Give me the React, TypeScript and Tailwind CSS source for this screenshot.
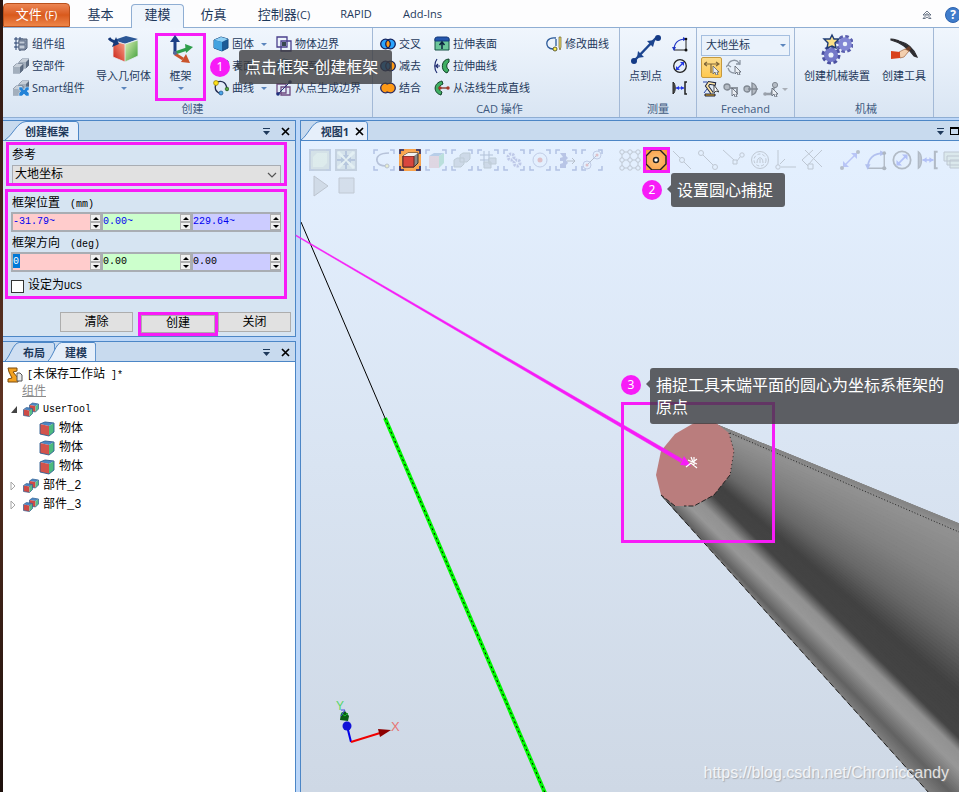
import { useState, type ReactNode } from 'react';
import clsx from 'clsx';

const UI = "font-['Open_Sans','Noto_Sans_CJK_SC',sans-serif]";
const MONO = "font-['Liberation_Mono','Noto_Sans_CJK_SC',monospace]";

/* ---------- icons ---------- */

type IconProps = { className?: string };

function Svg({ className = 'size-4', box = 16, children }: { className?: string; box?: number; children: ReactNode }) {
  return (
    <svg viewBox={`0 0 ${box} ${box}`} className={clsx('shrink-0', className)} fill="none" aria-hidden="true">
      {children}
    </svg>
  );
}

const GroupIcon = () => (
  <Svg>
    <path d="M3 1v13M7 1v14M1 3h9M1 7h8M1 11h8" stroke="#27406f" />
    <path d="M6 4l2-1h6v9l-2 2H6z" fill="#8997ab" stroke="#56657c" />
    <path d="M6 5h6v3H6zM6 9h6v4H6z" fill="#c3ccd8" stroke="#66758c" />
  </Svg>
);

const PartShape = () => (
  <>
    <path d="M6 4l3-3h7v6l-3 3H6z" fill="#5f6e83" stroke="#4f5d72" strokeWidth=".7" />
    <path d="M6 4h7v6H6z" fill="#a3afbd" />
    <path d="M6 4l3-3h7l-3 3z" fill="#c6ced8" />
    <path d="M0 9l3-3h7v6l-3 3H0z" fill="#5f6e83" stroke="#4f5d72" strokeWidth=".7" />
    <path d="M0 9h7v6H0z" fill="#a3afbd" />
    <path d="M0 9l3-3h7L7 9z" fill="#c6ced8" />
  </>
);

const PartIcon = () => <Svg><PartShape /></Svg>;

const SmartIcon = () => (
  <Svg>
    <PartShape />
    <path d="M6 7h3l2 3 2-3h3v3l-2 1 2 2v3h-3l-2-2-2 2H6v-3l2-2-2-1z" fill="#2383d8" stroke="#e9f4ff" strokeWidth=".5" />
  </Svg>
);

const ImportIcon = () => (
  <Svg className="size-8" box={32}>
    <path d="M6 7l12-4 12 3-13 5z" fill="#2b5796" />
    <path d="M5 8l12 3v18L5 24z" fill="url(#impRed)" />
    <path d="M17 11l13-4v16l-13 6z" fill="url(#impGreen)" />
    <path d="M5 8l12 3v18L5 24zM17 11l13-4v16l-13 6" stroke="#e6eef5" strokeWidth=".8" />
    <path d="M1 5c2 3 4 3 6 4" stroke="#173a7a" strokeWidth="3" />
    <path d="M8 4l3 7-7 3z" fill="#173a7a" />
    <defs>
      <linearGradient id="impRed" x1="1" y1="0" x2="0" y2="1">
        <stop stopColor="#f9a58a" />
        <stop offset="1" stopColor="#c91d12" />
      </linearGradient>
      <linearGradient id="impGreen" x1="0" y1="0" x2="1" y2="1">
        <stop stopColor="#dff2b8" />
        <stop offset="1" stopColor="#3a9c36" />
      </linearGradient>
    </defs>
  </Svg>
);

const FrameIcon = () => (
  <Svg className="size-8" box={32}>
    <path d="M10 21V7" stroke="#1c3f86" strokeWidth="3" />
    <path d="M10 2l5 7H5z" fill="#1c3f86" />
    <path d="M10 20l12-4" stroke="#2f9e4b" strokeWidth="3" />
    <path d="M28 14l-8-3 1 9z" fill="#2f9e4b" />
    <path d="M10 21l8 5" stroke="#c9542c" strokeWidth="3" />
    <path d="M25 30l-9-1 5-8z" fill="#c9542c" />
    <circle cx="10" cy="20" r="2" fill="#556699" />
  </Svg>
);

const SolidIcon = () => (
  <Svg>
    <path d="M1 4l7-3 7 2v9l-6 3-8-3z" fill="#1c5b97" stroke="#174a80" />
    <path d="M1 4l7-3 7 2-6 3z" fill="#8fd0f5" />
    <path d="M1 4l8 2v9l-8-3z" fill="#43a3e0" />
  </Svg>
);

const CurveIcon = () => (
  <Svg>
    <path d="M3 4C1 9 3 12 8 14M4 2c6-2 10 1 10 9" stroke="#222c50" strokeWidth="1.4" />
    <circle cx="3" cy="3" r="2.4" fill="#ffe11a" stroke="#8f7a00" strokeWidth=".7" />
    <circle cx="8" cy="13" r="2" fill="#48a5e8" stroke="#1c5186" strokeWidth=".7" />
    <circle cx="14" cy="9" r="1.8" fill="#54a845" stroke="#28571d" strokeWidth=".7" />
  </Svg>
);

const BorderIcon = () => (
  <Svg>
    <path d="M1 1h10v10H1zM5 5h10v10H5z" stroke="#4a3f8c" strokeWidth="1.3" />
    <path d="M6 6h4v4H6z" fill="#37474f" />
  </Svg>
);

const PointBorderIcon = () => (
  <Svg>
    <path d="M1 4h9v9H1zM5 7h9v8H5z" stroke="#6d4a80" strokeWidth="1.3" />
    <path d="M2 14L14 2" stroke="#263579" />
    <circle cx="14" cy="2" r="1.8" fill="#1e2f7e" />
    <circle cx="2" cy="14" r="1.8" fill="#1e2f7e" />
  </Svg>
);

function BoolIcon({ left, right, mid }: { left: string; right: string; mid: string }) {
  return (
    <Svg>
      <circle cx="5.5" cy="8" r="4.8" fill={left} />
      <circle cx="10.5" cy="8" r="4.8" fill={right} />
      <path d="M8 3.9a4.8 4.8 0 010 8.2 4.8 4.8 0 010-8.2z" fill={mid} />
      <circle cx="5.5" cy="8" r="4.8" stroke="#12215e" strokeWidth="1.3" />
      <circle cx="10.5" cy="8" r="4.8" stroke="#12215e" strokeWidth="1.3" />
    </Svg>
  );
}

const UnionIcon = () => (
  <Svg>
    <circle cx="5.5" cy="8" r="4.8" fill="#ff9a16" stroke="#2c2a5e" strokeWidth="1.3" />
    <circle cx="10.5" cy="8" r="4.8" fill="#ff9a16" stroke="#2c2a5e" strokeWidth="1.3" />
    <ellipse cx="8" cy="8" rx="4" ry="3.6" fill="#ff9a16" />
  </Svg>
);

const ExtrudeSurfaceIcon = () => (
  <Svg>
    <path d="M1 3v11h14V3z" fill="#6cc79b" stroke="#155045" />
    <path d="M1 2l2-1h10l2 1v3H1z" fill="#2456ad" stroke="#153a7c" />
    <path d="M8 13V6M5.5 9L8 6l2.5 3" stroke="#0c2340" strokeWidth="1.5" />
  </Svg>
);

const ExtrudeCurveIcon = () => (
  <Svg>
    <path d="M15 1C7 1 6 13 13 15l2-3c-3-2-3-6 0-8z" fill="#3fae62" stroke="#13432a" />
    <path d="M3 1C0 5 0 11 3 15M2 8h4M4 6L2 8l2 2" stroke="#1d2a70" strokeWidth="1.2" />
  </Svg>
);

const NormalIcon = () => (
  <Svg>
    <path d="M8 1C-1 3-1 13 7 15l1-3C4 10 4 6 9 4z" fill="#3fae62" stroke="#13432a" />
    <path d="M5 8h9" stroke="#7b2d22" strokeWidth="1.3" />
    <circle cx="6" cy="8" r="1.7" fill="#a83827" />
    <circle cx="14" cy="8" r="1.7" fill="#a83827" />
  </Svg>
);

const EditCurveIcon = () => (
  <Svg>
    <path d="M10 2C2 1-1 6 2 11c2 2 3 2 5 2M10 3v7" stroke="#2b5a9a" strokeWidth="1.3" />
    <circle cx="9" cy="13" r="2" fill="#fff04a" stroke="#3c3c20" strokeWidth=".8" />
    <path d="M13 1h2v10l-1 3-1-3z" fill="#f1dc68" stroke="#6c6330" strokeWidth=".7" />
  </Svg>
);

const PointToPointIcon = () => (
  <Svg className="size-8" box={32}>
    <path d="M5 27L26 5" stroke="#1c458f" strokeWidth="2.5" />
    <circle cx="28" cy="5" r="3" fill="#143a86" />
    <circle cx="4" cy="28" r="3" fill="#143a86" />
    <path d="M25 7l-2 7-6-6zM7 25l1-7 6 6z" fill="#1c458f" />
  </Svg>
);

const AngleIcon = ({ className }: IconProps) => (
  <Svg className={className}>
    <path d="M2 14L14 14V3" stroke="#222" />
    <path d="M2 14C2 7 6 3 14 3" stroke="#2237c4" strokeWidth="1.2" />
    <path d="M0 11h4L2 15zM11 1l4 2-4 2z" fill="#2237c4" />
    <circle cx="14" cy="14" r="1.5" fill="#111" />
    <circle cx="14" cy="3" r="1.3" fill="#111" />
  </Svg>
);

const DiameterIcon = ({ className }: IconProps) => (
  <Svg className={className}>
    <circle cx="8" cy="8" r="6.3" stroke="#222" strokeWidth="1.3" />
    <path d="M5 11l6-6" stroke="#2237e4" strokeWidth="1.2" />
    <path d="M12 4v4L8 4zM4 12V8l4 4z" fill="#2237e4" />
  </Svg>
);

const MinDistIcon = ({ className }: IconProps) => (
  <Svg className={className}>
    <path d="M1 2c3 2 3 10 0 12z" fill="#555" stroke="#222" />
    <path d="M15 2h-2v12h2" stroke="#222" strokeWidth="1.5" />
    <path d="M4 8h8" stroke="#2237e4" strokeWidth="1.2" />
    <path d="M4 8l3-2v4zM12 8L9 6v4z" fill="#2237e4" />
  </Svg>
);

const Cursor = () => <path d="M9 7v8l2-2 1 3h2l-1-3h2z" fill="#e9edf2" stroke="#59616d" strokeWidth=".8" />;

const MoveIcon = () => (
  <Svg>
    <path d="M0 5h15M3 3L0 5l3 2M12 3l3 2-3 2M7 5v9" stroke="#80683a" strokeWidth="1.2" />
    <Cursor />
  </Svg>
);

const RotateIcon = () => (
  <Svg>
    <path d="M2 7a6 6 0 0111-3l1 2M2 9c1 3 3 5 6 5M10 5h4V1M0 8l2-2 3 2" stroke="#8c96a3" strokeWidth="1.3" />
    <Cursor />
  </Svg>
);

const JogJointIcon = () => (
  <Svg>
    <path d="M2 15v-2h10v2z" fill="#f0b020" stroke="#1b2340" />
    <path d="M9 12L4 5l2-3 7 1" stroke="#1b2340" strokeWidth="3.6" />
    <path d="M9 12L4 5l2-3 6 1" stroke="#fbe3a6" strokeWidth="1.7" />
    <path d="M11 4v8l2-2 3 1z" fill="#fff" stroke="#222" strokeWidth=".8" />
    <path d="M0 1h4M1 12l3-4" stroke="#2845a8" />
  </Svg>
);

const JogLinearIcon = () => (
  <Svg>
    <circle cx="4" cy="6" r="3" fill="#b4bbc4" stroke="#808892" strokeWidth="1.3" />
    <path d="M6 7h8v5" stroke="#8d959f" strokeWidth="2" />
    <Cursor />
  </Svg>
);

const JogReorientIcon = () => (
  <Svg>
    <circle cx="4" cy="8" r="3" fill="#b4bbc4" stroke="#808892" strokeWidth="1.3" />
    <path d="M9 2c6 2 6 10 0 12zM5 8h10" fill="#b4bbc4" stroke="#808892" strokeWidth="1.3" />
  </Svg>
);

const JogMultiIcon = () => (
  <Svg>
    <path d="M2 13h6l4-8" stroke="#979fa9" strokeWidth="2.5" />
    <circle cx="12" cy="4" r="2.6" fill="#b4bbc4" stroke="#808892" />
    <circle cx="2" cy="13" r="1.8" fill="#9aa1ab" />
    <Cursor />
  </Svg>
);

const MechanismIcon = () => (
  <Svg className="size-8" box={32}>
    <circle cx="10" cy="22" r="7.5" stroke="#4a50a0" strokeWidth="4" strokeDasharray="3.5 2.39" />
    <circle cx="10" cy="22" r="4.8" stroke="#7378c8" strokeWidth="4.5" />
    <circle cx="24" cy="11" r="7" stroke="#5a5fae" strokeWidth="4" strokeDasharray="3.3 2.2" />
    <circle cx="24" cy="11" r="4.5" stroke="#8287d4" strokeWidth="4.5" />
    <path d="M11 2l2 4h5l-4 4 1 5-4-2-5 2 1-5-4-4h6z" fill="#fbe187" stroke="#1f3c74" strokeWidth="1.4" />
  </Svg>
);

const ToolIcon = () => (
  <Svg className="size-8" box={32}>
    <path d="M3 6c3 0 5 1 8 2 8 2 15 8 18 16l-3-1C21 16 14 10 3 7z" fill="#2c2c30" stroke="#2c2c30" strokeWidth="1.2" />
    <path d="M4 19l8 1 9-7 2 3-8 8-11 1z" fill="#6d3f2a" />
    <path d="M11 19l6-3 4 2-5 6-4 1z" fill="#f3cfae" stroke="#96572f" strokeWidth=".6" />
    <path d="M3 18l9 1v6l-9 1z" fill="#d8411d" />
  </Svg>
);

function CubeIcon() {
  return (
    <Svg>
      <path d="M1 3l5-2 9 1-5 3z" fill="#4d86c2" />
      <path d="M1 3l9 2v10l-9-2z" fill="#d2534c" />
      <path d="M10 5l5-3v9l-5 4z" fill="#4cba7e" />
      <path d="M1 3l5-2 9 1v9l-5 4-9-2z" stroke="#2c5f92" strokeWidth=".9" />
    </Svg>
  );
}

const MiniCube = () => (
  <>
    <path d="M0 2l3-2 6 1-3 2z" fill="#4d86c2" />
    <path d="M0 2l6 1v6L0 8z" fill="#cf4a45" />
    <path d="M6 3l3-2v5L6 9z" fill="#58bd86" />
    <path d="M0 2l3-2 6 1v5L6 9 0 8z" stroke="#2c5f92" strokeWidth=".7" />
  </>
);

const PartsIcon = () => (
  <Svg>
    <g transform="translate(6.500 1)"><MiniCube /></g>
    <g transform="translate(.5 5.500)"><MiniCube /></g>
  </Svg>
);

const StationIcon = () => (
  <Svg>
    <path d="M1 1h9v3L6 5l5 6v4H1v-3l4-1-3-6z" fill="#f3a11f" stroke="#7d4b0c" />
    <path d="M10 6h3l2 2v6h-5z" fill="#e9e9e9" stroke="#555" />
  </Svg>
);

/* ---------- ribbon ---------- */

const ribbonTabs = [
  { label: '基本', width: 'w-[61px]' },
  { label: '建模', width: 'w-[53px]', active: true },
  { label: '仿真', width: 'w-[59px]' },
  { label: '控制器', suffix: '(C)', width: 'w-[82px]' },
  { label: 'RAPID', width: 'w-[62px]', small: true },
  { label: 'Add-Ins', width: 'w-[71px]', small: true },
];

function Caret() {
  return <span className="inline-block border-x-3 border-t-3 border-x-transparent border-t-[#5b85bd]" />;
}

function RibbonItem({ icon, label, caret }: { icon: ReactNode; label: string; caret?: boolean }) {
  return (
    <button className="flex h-[22px] items-center gap-[3px] whitespace-nowrap">
      {icon}
      <span>{label}</span>
      {caret && <span className="ml-1 flex"><Caret /></span>}
    </button>
  );
}

function BigButton({ icon, label, caret, className }: { icon: ReactNode; label: string; caret?: boolean; className?: string }) {
  return (
    <button className={clsx('flex flex-col items-center whitespace-nowrap', className)}>
      {icon}
      <span className="mt-[3px] leading-4">{label}</span>
      {caret && <span className="mt-[3px] flex"><Caret /></span>}
    </button>
  );
}

function RibbonGroup({ title, className, children }: { title: string; className?: string; children: ReactNode }) {
  return (
    <section className={clsx('flex shrink-0 flex-col border-r border-[#a3b9d6]', className)}>
      <div className="flex h-[73px] items-start pt-[5px]">{children}</div>
      <div className="text-center leading-4 text-[#3f5a80]">{title}</div>
    </section>
  );
}

function Ribbon() {
  return (
    <header className={clsx(UI, 'text-[11px] text-[#1e395b]')}>
      <nav className="flex h-7 items-end border-b border-[#8faed3] bg-[#fdfdfe]">
        <button className="h-6 w-[67px] rounded-t-sm border border-[#b9501c] bg-linear-to-b from-[#ec8552] via-[#d95a1c] to-[#ee8548] pb-px text-[13px] text-white">
          文件 <span className="text-[11px]">(F)</span>
        </button>
        {ribbonTabs.map((tab) => (
          <button
            key={tab.label}
            className={clsx(
              'h-6 shrink-0 whitespace-nowrap',
              tab.width,
              tab.small ? 'text-[11px]' : 'text-[13px]',
              tab.active ? '-mb-px rounded-t-sm border border-b-0 border-[#8faed3] bg-[#eff5fc] pb-[3px]' : 'pb-px',
            )}
          >
            {tab.label}
            {tab.suffix && <span className="text-[11px]">{tab.suffix}</span>}
          </button>
        ))}
        <div className="ml-auto flex h-6 items-center gap-3">
          <button aria-label="折叠">
            <Svg className="size-3" box={12}>
              <path d="M2 6l4-4 4 4H8L6 4.500 4 6zM2 9.500l4-4 4 4H8L6 8 4 9.500z" fill="#fff" stroke="#465469" strokeWidth=".8" />
            </Svg>
          </button>
          <button aria-label="帮助" className="-mr-0.5 size-4 rounded-full border border-[#2d62ad] bg-[#3f7ccb] text-[12px] leading-3 font-bold text-white">
            ?
          </button>
        </div>
      </nav>

      <div className="flex h-[90px] overflow-hidden border-b border-[#8faed3] bg-linear-to-b from-[#f0f6fd] to-[#d9e5f3]">
        <RibbonGroup title="创建" className="w-[370px] pl-[10px]">
          <div className="w-[79px]">
            <RibbonItem icon={<GroupIcon />} label="组件组" />
            <RibbonItem icon={<PartIcon />} label="空部件" />
            <RibbonItem icon={<SmartIcon />} label="Smart组件" />
          </div>
          <BigButton icon={<ImportIcon />} label="导入几何体" caret className="w-[63px]" />
          <div className="h-[68px] w-[51px] border-3 border-[#f71cf7]">
            <BigButton icon={<FrameIcon />} label="框架" caret className="-mt-[3px] w-full" />
          </div>
          <div className="ml-[7px] w-[63px]">
            <RibbonItem icon={<SolidIcon />} label="固体" caret />
            <RibbonItem icon={<SolidIcon />} label="表面" caret />
            <RibbonItem icon={<CurveIcon />} label="曲线" caret />
          </div>
          <div>
            <RibbonItem icon={<BorderIcon />} label="物体边界" />
            <RibbonItem icon={<SolidIcon />} label="表面边界" />
            <RibbonItem icon={<PointBorderIcon />} label="从点生成边界" />
          </div>
        </RibbonGroup>

        <RibbonGroup title="CAD 操作" className="w-[247px] pl-[7px]">
          <div className="w-[54px]">
            <RibbonItem icon={<BoolIcon left="#2aa5ff" right="#2aa5ff" mid="#ff9a16" />} label="交叉" />
            <RibbonItem icon={<BoolIcon left="#1685dd" right="#ff9a16" mid="#1685dd" />} label="减去" />
            <RibbonItem icon={<UnionIcon />} label="结合" />
          </div>
          <div className="w-[112px]">
            <RibbonItem icon={<ExtrudeSurfaceIcon />} label="拉伸表面" />
            <RibbonItem icon={<ExtrudeCurveIcon />} label="拉伸曲线" />
            <RibbonItem icon={<NormalIcon />} label="从法线生成直线" />
          </div>
          <RibbonItem icon={<EditCurveIcon />} label="修改曲线" />
        </RibbonGroup>

        <RibbonGroup title="测量" className="w-[77px]">
          <BigButton icon={<PointToPointIcon />} label="点到点" className="w-[51px]" />
          <div className="flex flex-col pl-px">
            {[AngleIcon, DiameterIcon, MinDistIcon].map((Icon, i) => (
              <button key={i} className="flex h-[22px] items-center"><Icon /></button>
            ))}
          </div>
        </RibbonGroup>

        <RibbonGroup title="Freehand" className="w-[98px] px-1">
          <div className="flex w-full flex-col">
            <div className="relative mt-[2px]">
              <select aria-label="参考坐标" className="block h-[21px] w-full appearance-none border border-[#a5bfe0] bg-[#eaf2fb] pl-1 text-[11px]">
                <option>大地坐标</option>
              </select>
              <span className="pointer-events-none absolute top-[9px] right-1 flex"><Caret /></span>
            </div>
            <div className="flex h-[22px] items-center gap-px">
              <button className="flex size-[21px] items-center justify-center rounded-xs border border-[#c69a3f] bg-linear-to-b from-[#fbdc8c] to-[#ffc94e]">
                <MoveIcon />
              </button>
              <button className="flex size-[21px] items-center justify-center"><RotateIcon /></button>
            </div>
            <div className="flex h-[22px] items-center gap-1 pl-[2px]">
              <button><JogJointIcon /></button>
              <button><JogLinearIcon /></button>
              <button><JogReorientIcon /></button>
              <button className="flex items-center gap-[3px]">
                <JogMultiIcon />
                <span className="border-x-3 border-t-3 border-x-transparent border-t-[#a9afb8]" />
              </button>
            </div>
          </div>
        </RibbonGroup>

        <RibbonGroup title="机械" className="w-[139px] pl-1">
          <BigButton icon={<MechanismIcon />} label="创建机械装置" className="w-[76px]" />
          <BigButton icon={<ToolIcon />} label="创建工具" className="w-[58px]" />
        </RibbonGroup>
      </div>
    </header>
  );
}

/* ---------- docked panels ---------- */

function SlantTab({ label, active, className, children }: { label: string; active?: boolean; className?: string; children?: ReactNode }) {
  return (
    <div className={clsx('relative flex h-[19px] items-center justify-end pt-[2px]', className)}>
      <svg viewBox="0 0 74 19" preserveAspectRatio="none" className="absolute inset-0 size-full" aria-hidden="true">
        <path
          d="M0 19C8 14 12 1 21 .5H71Q73.5 .5 73.5 4V19"
          fill={active ? '#e6effa' : '#cfdff2'}
          stroke="#4c86c6"
          vectorEffect="non-scaling-stroke"
        />
      </svg>
      <button className="relative text-[11px] leading-4 font-bold text-[#1e395b]">{label}</button>
      {children}
    </div>
  );
}

const CloseGlyph = () => (
  <Svg className="size-[9px]" box={9}>
    <path d="M1 1l7 7M8 1L1 8" stroke="#000" strokeWidth="1.7" />
  </Svg>
);

const PinGlyph = () => (
  <Svg className="size-[9px]" box={9}>
    <path d="M1 1.5h7" stroke="#1e395b" />
    <path d="M1 4h7L4.5 8z" fill="#1e395b" />
  </Svg>
);

function PanelHeader({ children }: { children: ReactNode }) {
  return (
    <div className={clsx(UI, 'flex h-5 items-end border-b border-[#4c86c6] bg-[#c8daee] pl-[2px]')}>
      {children}
      <div className="ml-auto flex h-full items-center gap-[10px] pt-px pr-[5px]">
        <button aria-label="选项"><PinGlyph /></button>
        <button aria-label="关闭面板"><CloseGlyph /></button>
      </div>
    </div>
  );
}

function Spin({ label, value, tone, selected }: { label: string; value: string; tone: string; selected?: boolean }) {
  const [text, setText] = useState(value);
  return (
    <div className={clsx('flex h-5 flex-1 border-2 border-r-0 border-[#a9adb3]', tone)}>
      <input
        aria-label={label}
        value={text}
        onChange={(e) => setText(e.target.value)}
        className={clsx('h-[14px] min-w-0 text-[10px] outline-none', selected ? 'w-[7px] bg-[#0078d7] text-white' : 'w-full bg-transparent')}
      />
      <div className="ml-auto flex w-[11px] shrink-0 flex-col bg-[#d6e4f2]">
        <button aria-label={`${label}+`} className="flex flex-1 items-center justify-center border border-[#b0b0b0] bg-[#f0f0f0]">
          <span className="border-x-3 border-b-3 border-x-transparent border-b-black" />
        </button>
        <button aria-label={`${label}-`} className="flex flex-1 items-center justify-center border border-[#b0b0b0] bg-[#f0f0f0]">
          <span className="border-x-3 border-t-3 border-x-transparent border-t-black" />
        </button>
      </div>
    </div>
  );
}

function Unit({ children }: { children: ReactNode }) {
  return <span className="ml-[10px] text-[10px]">{children}</span>;
}

const formButton = 'border border-[#adadad] bg-[#e1e1e1]';

function CreateFramePanel() {
  return (
    <section className="border border-l-0 border-[#4c86c6] bg-[#d6e4f2]">
      <PanelHeader>
        <SlantTab label="创建框架" active className="w-[74px] pr-[10px]" />
      </PanelHeader>
      <form className={clsx(MONO, 'pt-px text-[12px] text-black')} onSubmit={(e) => e.preventDefault()}>
        <div className="mr-2 ml-[3px] border-3 border-[#f71cf7] px-[3px]">
          <label htmlFor="reference" className="block h-5 leading-[22px]">参考</label>
          <div className="relative">
            <select id="reference" className="block h-[18px] w-full appearance-none border border-b-0 border-[#a9adb3] bg-[#e1e1e1] pt-px pl-[2px] leading-4">
              <option>大地坐标</option>
            </select>
            <svg viewBox="0 0 10 6" className="pointer-events-none absolute top-[7px] right-1 h-[6px] w-[10px]" fill="none">
              <path d="M1 1l4 4 4-4" stroke="#555" strokeWidth="1.2" />
            </svg>
          </div>
        </div>

        <div className="mt-[3px] mr-2 ml-[2px] border-3 border-[#f71cf7] px-[3px]">
          <div className="h-5 pl-px leading-[24px]">框架位置<Unit>(mm)</Unit></div>
          <div className="flex text-[#0000f0]">
            <Spin label="X" value="-31.79~" tone="bg-[#ffcccc]" />
            <Spin label="Y" value="0.00~" tone="bg-[#ccffcc]" />
            <Spin label="Z" value="229.64~" tone="bg-[#ccccff]" />
          </div>
          <div className="h-5 pl-px leading-[24px]">框架方向<Unit>(deg)</Unit></div>
          <div className="flex">
            <Spin label="RX" value="0" tone="bg-[#ffcccc]" selected />
            <Spin label="RY" value="0.00" tone="bg-[#ccffcc]" />
            <Spin label="RZ" value="0.00" tone="bg-[#ccccff]" />
          </div>
          <label className="flex h-6 items-center gap-1 pt-1">
            <input type="checkbox" className="size-[13px] appearance-none border border-[#333] bg-white" />
            <span className="leading-5">设定为<span className="text-[10px]">UCS</span></span>
          </label>
        </div>

        <div className="mt-[13px] flex h-6 items-start justify-end pr-1">
          <button className={clsx(formButton, 'mr-[5px] h-5 w-[73px] pt-px leading-[18px]')}>清除</button>
          <span className="flex h-6 w-20 border-3 border-[#f71cf7]">
            <button className={clsx(formButton, 'w-full leading-4')}>创建</button>
          </span>
          <button className={clsx(formButton, 'h-5 w-[73px] pt-px leading-[18px]')}>关闭</button>
        </div>
      </form>
    </section>
  );
}

const treeRows = [
  { label: 'UserTool', latin: true, state: 'open' },
  { label: '物体', leaf: true },
  { label: '物体', leaf: true },
  { label: '物体', leaf: true },
  { label: '部件_2', state: 'closed' },
  { label: '部件_3', state: 'closed' },
];

function ModelTreePanel() {
  return (
    <section className="mt-1 flex flex-1 flex-col border border-b-0 border-l-0 border-[#4c86c6] bg-white">
      <PanelHeader>
        <SlantTab label="布局" className="w-[50px] pr-[10px]" />
        <SlantTab label="建模" active className="-ml-[7px] w-[48px] pr-[9px]" />
      </PanelHeader>
      <ul className={clsx(MONO, 'pt-[5px] text-[12px] text-black')}>
        <li className="flex h-4 items-center gap-1 pl-1">
          <StationIcon />
          <span className="whitespace-pre">
            <span className="text-[10px]">[</span>未保存工作站<span className="text-[10px]"> ]*</span>
          </span>
        </li>
        <li className="flex h-[17px] items-center pl-[19px] text-[#8a8a8a] underline">组件</li>
        {treeRows.map((row, i) => (
          <li key={i} className={clsx('flex h-[19px] items-center gap-1', row.leaf ? 'pl-9' : 'pl-1')}>
            {!row.leaf && (
              <svg viewBox="0 0 12 12" className="size-3" fill="none">
                {row.state === 'open' ? (
                  <path d="M10 2v7H4z" fill="#444" />
                ) : (
                  <path d="M4 2l4 4-4 4z" stroke="#a5a5a5" />
                )}
              </svg>
            )}
            {row.leaf ? <CubeIcon /> : <PartsIcon />}
            <span className={row.latin ? 'text-[10px]' : ''}>{row.label}</span>
          </li>
        ))}
      </ul>
    </section>
  );
}

/* ---------- 3D view ---------- */

// shading bands: near point on the end cap, far point past the right edge, grey level
const bands: [number, number, number, number, number][] = [
  [661, 495, 970, 839, 130],
  [668, 502, 985, 826, 98],
  [690, 506, 985, 793, 152],
  [702, 502, 985, 775, 146],
  [714, 495, 985, 762, 68],
  [721, 485, 985, 712, 66],
  [728, 474, 985, 658, 104],
  [731, 455, 985, 605, 128],
  [727, 433, 985, 543, 146],
  [716, 424, 985, 534, 132],
];

const STEPS = 12;

const strips = bands.slice(1).flatMap((b, i) => {
  const a = bands[i];
  return Array.from({ length: STEPS }, (_, s) => {
    const mix = (k: number, t: number) => a[k] + (b[k] - a[k]) * t;
    const t0 = s / STEPS;
    const t1 = (s + 1) / STEPS;
    const g = Math.round(mix(4, (t0 + t1) / 2));
    return {
      points: [
        [mix(0, t0), mix(1, t0)],
        [mix(2, t0), mix(3, t0)],
        [mix(2, t1), mix(3, t1)],
        [mix(0, t1), mix(1, t1)],
      ].map((p) => p.join(',')).join(' '),
      color: `rgb(${g},${g},${g})`,
    };
  });
});

function Scene() {
  return (
    <svg viewBox="301 141 658 651" preserveAspectRatio="xMinYMin slice" className="absolute inset-0 size-full" fill="none" aria-hidden="true">
      <path d="M301 222L385 418" stroke="#000" />
      <path d="M385 418L545 793" stroke="#00f800" strokeWidth="4" />
      <path d="M385 418L545 793" stroke="#000" strokeDasharray="2 3" />
      <clipPath id="tube">
        <path d="M661 495L970 839H985V534L716 424z" />
      </clipPath>
      <g clipPath="url(#tube)">
        {strips.map((s, i) => (
          <polygon key={i} points={s.points} fill={s.color} stroke={s.color} strokeWidth="2" />
        ))}
      </g>
      <path d="M661 495L930 794" stroke="#222" strokeDasharray="6 3" />
      <path d="M730 433L959 532" stroke="#222" strokeDasharray="1 2" />
      <path
        d="M694 423H716L729 433 734 451 730 475 714 495 694 506H675L661 495 656 475 661 451 675 434z"
        fill="#ba7d7d"
      />
      <path d="M729 433L734 451 730 475" stroke="#222" strokeDasharray="1 3" />
      <path d="M730 475L714 495 694 506H684M675 506L661 495" stroke="#222" strokeDasharray="5 2" />
      <path d="M351 742L346 722" stroke="#0000e8" strokeWidth="2" />
      <path d="M351 742L380 733" stroke="#f00000" strokeWidth="2" />
      <path d="M378 729l13 1-11 7z" fill="#8d0000" />
      <path d="M340 720l1-7 4-2 4 5-1 5z" fill="#0a5c14" />
      <path d="M341 713l4 3 3-3" stroke="#15c423" />
      <circle cx="347" cy="726" r="4.5" fill="#1212d8" />
      <path d="M341 710h4l-4 6" stroke="#4a4ae0" />
      <text x="336" y="710" fontSize="12" fill="#55d766" className="font-['Liberation_Sans',sans-serif]">Y</text>
      <text x="391" y="731" fontSize="13" fill="#e77373" className="font-['Liberation_Sans',sans-serif]">X</text>
    </svg>
  );
}

function Marks() {
  return (
    <svg viewBox="301 141 658 651" preserveAspectRatio="xMinYMin slice" className="pointer-events-none absolute inset-0 size-full overflow-visible" fill="none" aria-hidden="true">
      <path d="M296 235L682 459 680 462 296 236z" fill="#f71cf7" stroke="#f71cf7" strokeWidth=".5" />
      <path d="M684 456l7 10-11-1z" fill="#f71cf7" />
      <path d="M686 467l5-4 6 5M691 457l2 5 4-3M694 457v9M688 460l9 4" stroke="#fff" strokeWidth="1.2" />
      <path d="M622.5 403.5h151v138h-151z" stroke="#f71cf7" strokeWidth="3" />
    </svg>
  );
}

function Corners({ color = '#27409a' }: { color?: string }) {
  return <path d="M1 5V1h4M17 1h4v4M21 17v4h-4M5 21H1v-4" stroke={color} strokeWidth="1.5" />;
}

const V = ({ children }: { children: ReactNode }) => <Svg className="size-[22px]" box={22}>{children}</Svg>;

const viewTools = [
  <V key="fit"><path d="M1 1h20v20H1z" fill="#a8b9a6" stroke="#6c7a88" strokeWidth="2" /><path d="M4 8l4-4h10v10l-4 4H4z" fill="#cfe3ba" /><Corners color="#5a6f9a" /></V>,
  <V key="centre"><path d="M1 1h20v20H1z" fill="#a9bfb5" stroke="#6c7a88" strokeWidth="2" /><path d="M3 3l16 16M19 3L3 19" stroke="#e3f0d4" strokeWidth="3" /><path d="M11 2v6M11 20v-6M2 11h6M20 11h-6" stroke="#34517e" strokeWidth="2" /><path d="M8 6h6l-3 4zM8 16h6l-3-4zM6 8v6l4-3zM16 8v6l-4-3z" fill="#34517e" /></V>,
];

const selectTools = [
  <V key="curve"><Corners /><path d="M16 4C6 4 3 8 4 12c1 4 5 5 9 5" stroke="#34406e" strokeWidth="1.6" /><circle cx="14" cy="17" r="2" fill="#f4e84a" stroke="#444" /></V>,
  <V key="body"><path d="M4 7l5-3h10v10l-4 4H4z" fill="#888" stroke="#333" /><path d="M4 7h11v11H4z" fill="#d8463e" stroke="#5c2623" /><path d="M4 7l5-3h10l-4 3z" fill="#f1f1f1" /><Corners color="#17297a" /></V>,
  <V key="face"><Corners /><path d="M4 7l5-3h10l-5 3z" fill="#3a6cab" /><path d="M4 7h10v12H4z" fill="#d38f91" /><path d="M14 7l5-3v10l-5 5z" fill="#44b179" /></V>,
  <V key="part"><Corners /><path d="M9 6l3-2h7v6l-3 3H9zM3 11l3-2h7v6l-3 3H3z" fill="#8d99a8" stroke="#556666" /></V>,
  <V key="group"><Corners /><path d="M7 2v14M12 2v12M3 6h13M3 11h10" stroke="#27406f" /><path d="M12 9h7v6h-7zM7 13h7v6H7z" fill="#8d99a8" stroke="#556666" /></V>,
  <V key="mech"><Corners /><circle cx="8" cy="8" r="3" stroke="#5259a8" strokeWidth="3" strokeDasharray="2 1" /><circle cx="14" cy="14" r="3" stroke="#5259a8" strokeWidth="3" strokeDasharray="2 1" /></V>,
  <V key="target"><Corners /><circle cx="11" cy="11" r="7" stroke="#5a68a0" /><circle cx="11" cy="11" r="2.5" fill="#d0392b" /></V>,
  <V key="move"><Corners /><path d="M5 4h6v3l2 2-2 2 2 3-2 2v3H5v-4l3-1v-2H5v-3l3-1z" fill="#3c4aa0" /><path d="M12 12h8M17 9l3 3-3 3" stroke="#333" /></V>,
  <V key="path"><Corners /><path d="M7 15l8-8" stroke="#333344" /><circle cx="6" cy="16" r="4" stroke="#5a68a0" /><circle cx="6" cy="16" r="1.5" fill="#d0392b" /><circle cx="16" cy="6" r="4" stroke="#5a68a0" /><circle cx="16" cy="6" r="1.5" fill="#d0392b" /></V>,
];

const snapTools = [
  <V key="grid">
    {[3, 11, 19].flatMap((x) => [3, 11, 19].map((y) => <circle key={`${x}-${y}`} cx={x} cy={y} r="2.2" stroke="#555" />))}
    <path d="M5 3h4M13 3h4M5 19h4M13 19h4M3 5v4M3 13v4M11 5v4M11 13v4M19 5v4M19 13v4M5 11h4M13 11h4" stroke="#555" />
  </V>,
  <V key="centre"><path d="M7 1h8l6 6v8l-6 6H7l-6-6V7z" stroke="#222" strokeWidth="1.4" /><circle cx="11" cy="11" r="2.5" fill="#fff" stroke="#222" strokeWidth="1.5" /></V>,
  <V key="mid"><path d="M2 2l7 7M13 13l7 7" stroke="#555" /><circle cx="11" cy="11" r="2.5" stroke="#555" /></V>,
  <V key="end"><path d="M6 6l10 10" stroke="#555" /><circle cx="4" cy="4" r="2.5" stroke="#555" /><circle cx="18" cy="18" r="2.5" stroke="#555" /></V>,
  <V key="edge"><path d="M0 1l11 10M14 12l3-4" stroke="#555" /><path d="M10 11h4v4h-4z" stroke="#555" /><circle cx="19" cy="6" r="2.2" stroke="#555" /></V>,
  <V key="gravity"><circle cx="11" cy="11" r="8.5" stroke="#555" /><circle cx="11" cy="11" r="6" stroke="#555" strokeDasharray="3 2" /><path d="M8 14c0-7 6-7 6 0M11 10v4" stroke="#555" /></V>,
  <V key="ucs"><path d="M3 1v15M6 18h15M5 15l5-5" stroke="#555" /><circle cx="3" cy="18" r="2.2" stroke="#555" /></V>,
  <V key="cross"><path d="M4 1l17 17M21 1L13 9 8 15M1 11L12 1M1 11l6 6" stroke="#555" /><path d="M7 15h5v5H7z" stroke="#555" /></V>,
];

const measureTools = [
  <V key="p2p"><path d="M4 18L18 4" stroke="#3c4ae0" strokeWidth="1.5" /><path d="M18 4v6l-6-6zM4 18v-6l6 6z" fill="#3c4ae0" /><circle cx="19" cy="3" r="2" fill="#333" /><circle cx="3" cy="19" r="2" fill="#333" /></V>,
  <AngleIcon key="angle" className="size-[22px]" />,
  <DiameterIcon key="dia" className="size-[22px]" />,
  <MinDistIcon key="dist" className="size-[22px]" />,
  <V key="keep"><path d="M1 3h16v9H1zM4 7h16v9H4zM7 11h16v8H7z" fill="#c4d6ba" stroke="#555" /></V>,
];

function ToolGroup({ tools, active }: { tools: ReactNode[]; active?: number }) {
  return (
    <div className="flex gap-1">
      {tools.map((tool, i) => (
        <button
          key={i}
          className={clsx(
            'size-[22px]',
            i === active ? 'bg-radial from-[#ffc37a] to-[#f59433]' : 'opacity-25',
          )}
        >
          {tool}
        </button>
      ))}
    </div>
  );
}

function Badge({ n, className }: { n: number; className: string }) {
  return (
    <span className={clsx("absolute z-20 flex size-5 items-center justify-center rounded-full bg-[#f71cf7] font-['Noto_Sans',sans-serif] text-[12px] leading-5 text-white", className)}>
      {n}
    </span>
  );
}

function Callout({ text, className }: { text: string; className: string }) {
  return (
    <div className={clsx(UI, 'absolute z-10 rounded-[3px] bg-[#3c3c3e]/80 p-[6px] text-[16px] leading-[22px] text-white', className)}>
      <span className="absolute top-3 -left-1 border-y-4 border-r-4 border-y-transparent border-r-[#3c3c3e]/80" />
      {text}
    </div>
  );
}

function ViewPanel() {
  return (
    <main className="flex min-w-0 flex-1 flex-col border-t border-l border-[#4c86c6]">
      <div className={clsx(UI, 'flex h-5 items-end border-b border-[#4c86c6] bg-[#c8daee]')}>
        <SlantTab label="视图1" active className="w-[67px] gap-[6px] pr-[4px]">
          <button aria-label="关闭视图" className="relative"><CloseGlyph /></button>
        </SlantTab>
        <div className="ml-auto flex h-full items-center gap-[5px] pt-px">
          <button aria-label="视图选项"><PinGlyph /></button>
          <button aria-label="最大化" className="h-2 w-[9px] border border-t-2 border-black" />
        </div>
      </div>
      <div className="relative flex-1 bg-linear-to-b from-[#e4f0ff] to-[#ced8e5]">
        <Scene />
        <div className="relative h-[60px] overflow-hidden pt-2 pl-2">
          <div className="flex gap-4">
            <ToolGroup tools={viewTools} />
            <ToolGroup tools={selectTools} active={1} />
            <div className="relative">
              <ToolGroup tools={snapTools} active={1} />
              <span className="pointer-events-none absolute -top-[2px] left-6 h-[26px] w-[27px] border-3 border-[#f71cf7]" />
            </div>
            <ToolGroup tools={measureTools} />
          </div>
          <div className="mt-1 flex gap-1 opacity-30">
            <button aria-label="播放"><V><path d="M5 1l14 10L5 21z" fill="#a9b0b8" stroke="#666" /></V></button>
            <button aria-label="停止"><V><path d="M4 3h15v15H4z" fill="#b5bbc3" stroke="#777" /></V></button>
          </div>
        </div>
        <Marks />
        <Badge n={2} className="top-[39px] left-[341px]" />
        <Callout text="设置圆心捕捉" className="top-[32px] left-[370px] w-[114px]" />
        <Badge n={3} className="top-[234px] left-[320px]" />
        <Callout text="捕捉工具末端平面的圆心为坐标系框架的原点" className="top-[227px] right-0 left-[349px]" />
        <div className="absolute right-[10px] bottom-[9px] font-['Liberation_Sans',sans-serif] text-[16px] leading-5 text-white/80 [text-shadow:1px_1px_1px_#8888]">
          https://blog.csdn.net/Chroniccandy
        </div>
      </div>
    </main>
  );
}

export default function App() {
  return (
    <div className="relative flex min-h-screen overflow-hidden bg-[#bbd6f8]">
      <div className="w-[3px] shrink-0 bg-linear-to-b from-[#2a1510] via-[#5e3322] to-[#1d100c]" />
      <div className="flex min-w-0 flex-1 flex-col">
        <Ribbon />
        <div className="mt-[2px] flex flex-1">
          <div className="mr-1 flex w-[293px] shrink-0 flex-col">
            <CreateFramePanel />
            <ModelTreePanel />
          </div>
          <ViewPanel />
        </div>
      </div>
      <Badge n={1} className="top-[57px] left-[210px]" />
      <Callout text="点击框架-创建框架" className="top-[50px] left-[239px] w-[153px] whitespace-nowrap" />
    </div>
  );
}
